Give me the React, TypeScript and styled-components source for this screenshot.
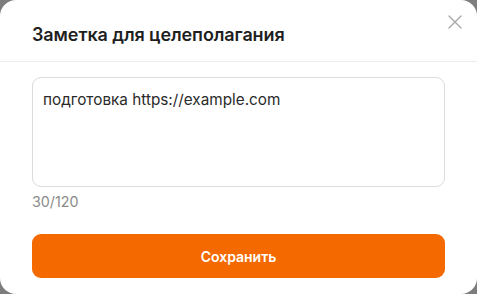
import React, { useState } from 'react';
import styled, { createGlobalStyle } from 'styled-components';

const GlobalStyle = createGlobalStyle`
  html, body {
    margin: 0;
    padding: 0;
    background: #7d7d7d;
  }
  * {
    box-sizing: border-box;
  }
`;

const Modal = styled.div`
  width: 477px;
  height: 294px;
  background: #ffffff;
  border-radius: 16px;
  font-family: Inter, 'Noto Sans', sans-serif;
  position: relative;
  overflow: hidden;
  display: flex;
  flex-direction: column;
`;

const Header = styled.div`
  height: 62px;
  padding: 0 32px;
  display: flex;
  align-items: center;
  border-bottom: 1px solid #ececec;
`;

const Title = styled.h2`
  margin: 0;
  padding-top: 7px;
  font-size: 18px;
  font-weight: 600;
  color: #1f1f1f;
  letter-spacing: -0.1px;
`;

const CloseButton = styled.button`
  position: absolute;
  top: 13px;
  right: 13px;
  width: 18px;
  height: 18px;
  padding: 0;
  border: none;
  background: transparent;
  cursor: pointer;
  display: flex;
  align-items: center;
  justify-content: center;
`;

const Body = styled.div`
  padding: 15px 32px 0;
  display: flex;
  flex-direction: column;
`;

const NoteArea = styled.textarea`
  width: 100%;
  height: 110px;
  resize: none;
  border: 1px solid #dcdcdc;
  border-radius: 9px;
  padding: 12px 10px;
  font-family: inherit;
  font-size: 15.3px;
  line-height: 19px;
  color: #2a2a2a;
  outline: none;
`;

const Counter = styled.div`
  margin-top: 6px;
  font-size: 14.3px;
  color: #8a8a8a;
`;

const SaveButton = styled.button`
  margin-top: 24px;
  width: 100%;
  height: 44px;
  border: none;
  border-radius: 9px;
  background: #f56a00;
  color: #ffffff;
  font-family: inherit;
  font-size: 14px;
  font-weight: 600;
  cursor: pointer;
`;

const MAX = 120;

export default function App() {
  const [text, setText] = useState('подготовка https://example.com');

  return (
    <>
      <GlobalStyle />
      <Modal>
        <Header>
          <Title>Заметка для целеполагания</Title>
        </Header>
        <CloseButton aria-label="close">
          <svg width="16" height="16" viewBox="0 0 16 16">
            <path d="M2 2 L14 14 M14 2 L2 14" stroke="#a8a8a8" strokeWidth="1.4" strokeLinecap="round" />
          </svg>
        </CloseButton>
        <Body>
          <NoteArea value={text} maxLength={MAX} onChange={(e) => setText(e.target.value)} />
          <Counter>
            {text.length}/{MAX}
          </Counter>
          <SaveButton>Сохранить</SaveButton>
        </Body>
      </Modal>
    </>
  );
}
